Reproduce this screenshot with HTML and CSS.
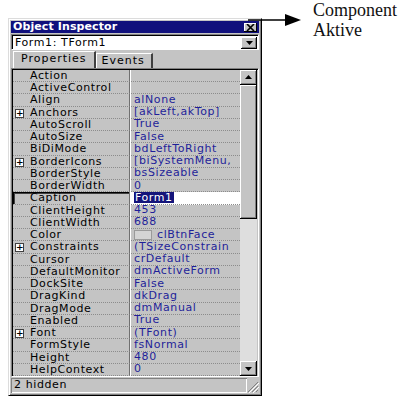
FILE: index.html
```html
<!DOCTYPE html>
<html lang="en">
<head>
    <meta charset="UTF-8">
    <title>Object Inspector</title>
    <link rel="stylesheet" href="styles.css">
</head>
<body>
    <div class="window">
        <div class="titlebar">
            <span class="title">Object Inspector</span>
            <span class="close">
                <svg width="9" height="7" viewBox="0 0 9 7"><path d="M1 0 L8 7 M8 0 L1 7" stroke="#000" stroke-width="1.6"/></svg>
            </span>
        </div>
        <div class="combo">
            <span class="combo-text">Form1: TForm1</span>
            <span class="btn drop">
                <svg width="7" height="4" viewBox="0 0 7 4"><path d="M0 0 H7 L3.5 4 Z" fill="#000"/></svg>
            </span>
        </div>
        <div class="tabs">
            <span class="tab active">Properties</span>
            <span class="tab">Events</span>
        </div>
        <div class="grid">
            <div class="props" id="props"></div>
            <div class="scrollbar">
                <span class="btn sbtn">
                    <svg width="7" height="4" viewBox="0 0 7 4"><path d="M0 4 H7 L3.5 0 Z" fill="#000"/></svg>
                </span>
                <span class="thumb"></span>
                <span class="track"></span>
                <span class="btn sbtn">
                    <svg width="7" height="4" viewBox="0 0 7 4"><path d="M0 0 H7 L3.5 4 Z" fill="#000"/></svg>
                </span>
            </div>
        </div>
        <div class="status">
            <span class="panel">2 hidden</span>
            <span class="grip">
                <svg width="12" height="12" viewBox="0 0 12 12"><path d="M11 1 L1 11 M11 5 L5 11 M11 9 L9 11" stroke="#808080" stroke-width="1"/><path d="M12 2 L2 12 M12 6 L6 12" stroke="#fff" stroke-width="1"/></svg>
            </span>
        </div>
    </div>

    <div class="note">
        <svg class="arrow" width="54" height="14" viewBox="0 0 54 14"><path d="M0 7 H40" stroke="#000" stroke-width="1.3"/><path d="M37 1 L53 7 L37 13 Z" fill="#000"/></svg>
        <div class="note-text">Component<br>Aktive</div>
    </div>

    <script>
        var rows = [
            ["Action", ""],
            ["ActiveControl", ""],
            ["Align", "alNone"],
            ["Anchors", "[akLeft,akTop]", true],
            ["AutoScroll", "True"],
            ["AutoSize", "False"],
            ["BiDiMode", "bdLeftToRight"],
            ["BorderIcons", "[biSystemMenu,", true],
            ["BorderStyle", "bsSizeable"],
            ["BorderWidth", "0"],
            ["Caption", "Form1"],
            ["ClientHeight", "453"],
            ["ClientWidth", "688"],
            ["Color", "clBtnFace"],
            ["Constraints", "(TSizeConstrain", true],
            ["Cursor", "crDefault"],
            ["DefaultMonitor", "dmActiveForm"],
            ["DockSite", "False"],
            ["DragKind", "dkDrag"],
            ["DragMode", "dmManual"],
            ["Enabled", "True"],
            ["Font", "(TFont)", true],
            ["FormStyle", "fsNormal"],
            ["Height", "480"],
            ["HelpContext", "0"]
        ];
        var html = "";
        for (var i = 0; i < rows.length; i++) {
            var r = rows[i];
            var cls = r[0] == "Caption" ? "row selected" : "row";
            var val = r[1];
            if (r[0] == "Caption") val = '<span class="hl">' + val + '</span>';
            if (r[0] == "Color") val = '<span class="swatch"></span>' + val;
            html += '<div class="' + cls + '"><span class="name">' +
                (r[2] ? '<span class="plus">+</span>' : '') + r[0] +
                '</span><span class="value">' + val + '</span></div>';
        }
        document.getElementById("props").innerHTML = html;
    </script>
</body>
</html>
```

FILE: styles.css
```css
body {
    margin: 0;
    background: #fff;
    font-family: "DejaVu Sans", sans-serif;
    font-size: 11px;
    letter-spacing: 0.6px;
    color: #000;
}
.window {
    width: 254px;
    height: 378px;
    margin: 18px 0 0 8px;
    box-sizing: border-box;
    background: #c4c4c4;
    border: 1px solid;
    border-color: #dcdcdc #000 #000 #dcdcdc;
    box-shadow: inset 1px 1px #fff, inset -1px -1px #808080;
    padding: 2px;
    display: flex;
    flex-direction: column;
}
.titlebar {
    height: 12px;
    background: #10107c;
    color: #fff;
    font-weight: bold;
    display: flex;
    align-items: center;
    justify-content: space-between;
    padding: 0 2px 0 2px;
}
.title {
    line-height: 12px;
    letter-spacing: 0.1px;
}
.close {
    width: 13px;
    height: 9px;
    background: #c4c4c4;
    box-shadow: inset -1px -1px #000, inset 1px 1px #fff;
    display: flex;
    align-items: center;
    justify-content: center;
}
.combo {
    height: 16px;
    margin-top: 1px;
    box-sizing: border-box;
    background: #fff;
    border: 1px solid;
    border-color: #808080 #fff #fff #808080;
    box-shadow: inset 1px 1px #000;
    display: flex;
    align-items: center;
    justify-content: space-between;
    padding: 1px 1px 0 3px;
}
.btn {
    background: #c4c4c4;
    box-shadow: inset -1px -1px #000, inset 1px 1px #fff, inset -2px -2px #808080;
    display: flex;
    align-items: center;
    justify-content: center;
}
.drop {
    width: 16px;
    height: 12px;
}
.tabs {
    height: 18px;
    display: flex;
    align-items: flex-end;
    padding-left: 2px;
}
.tab {
    height: 14px;
    line-height: 14px;
    padding: 0 6px 0 5px;
    letter-spacing: 1px;
    border-top: 1px solid #fff;
    border-left: 1px solid #fff;
    border-right: 2px solid #404040;
}
.tab.active {
    height: 16px;
    padding: 0 7px 0 7px;
}
.grid {
    height: 310px;
    box-sizing: border-box;
    border: 1px solid;
    border-color: #808080 #fff #fff #808080;
    box-shadow: inset 1px 1px #000;
    padding: 1px 1px 0 1px;
    display: flex;
}
.props {
    flex: 1;
    overflow: hidden;
}
.row {
    height: 12.25px;
    display: flex;
    white-space: nowrap;
}
.name {
    width: 117px;
    flex-shrink: 0;
    box-sizing: border-box;
    padding-left: 17px;
    position: relative;
    line-height: 12px;
    border-right: 1px solid #707070;
    box-shadow: 1px 0 #fff;
    border-bottom: 1px dotted #8c8c8c;
}
.value {
    flex: 1;
    overflow: hidden;
    padding-left: 3px;
    margin-left: 1px;
    line-height: 12px;
    color: #1f1f99;
    border-bottom: 1px dotted #8c8c8c;
    display: flex;
    align-items: center;
}
.plus {
    position: absolute;
    left: 2px;
    top: 2px;
    width: 7px;
    height: 7px;
    border: 1px solid #404040;
    background: #fff;
    font-size: 9px;
    line-height: 7px;
    letter-spacing: 0;
    text-align: center;
    font-weight: bold;
}
.selected .name {
    box-shadow: inset 1px 1px #000, inset 2px 2px #404040, 1px 0 #fff;
}
.selected .value {
    background: #fff;
}
.hl {
    background: #14147a;
    color: #fff;
    padding: 0 1px;
    line-height: 11px;
}
.swatch {
    width: 16px;
    height: 8px;
    background: #d4d4d4;
    border: 1px solid #9a9a9a;
    margin-right: 5px;
}
.scrollbar {
    width: 17px;
    display: flex;
    flex-direction: column;
}
.sbtn {
    height: 15px;
    flex-shrink: 0;
}
.thumb {
    height: 134px;
    background: #c4c4c4;
    box-shadow: inset -1px -1px #000, inset 1px 1px #fff, inset -2px -2px #808080;
}
.track {
    flex: 1;
    background: #dedede;
}
.status {
    height: 15px;
    display: flex;
    align-items: stretch;
    padding-top: 1px;
}
.panel {
    flex: 1;
    box-shadow: inset 1px 1px #808080, inset -1px -1px #fff;
    padding-left: 3px;
    line-height: 14px;
}
.grip {
    width: 12px;
    display: flex;
    align-items: flex-end;
}
.note {
    position: absolute;
    left: 248px;
    top: 0;
    display: flex;
    align-items: flex-start;
}
.arrow {
    margin-top: 13px;
}
.note-text {
    margin-left: 11px;
    font-family: "Liberation Serif", serif;
    font-size: 18px;
    letter-spacing: 0;
    line-height: 20px;
    color: #111;
}
```
